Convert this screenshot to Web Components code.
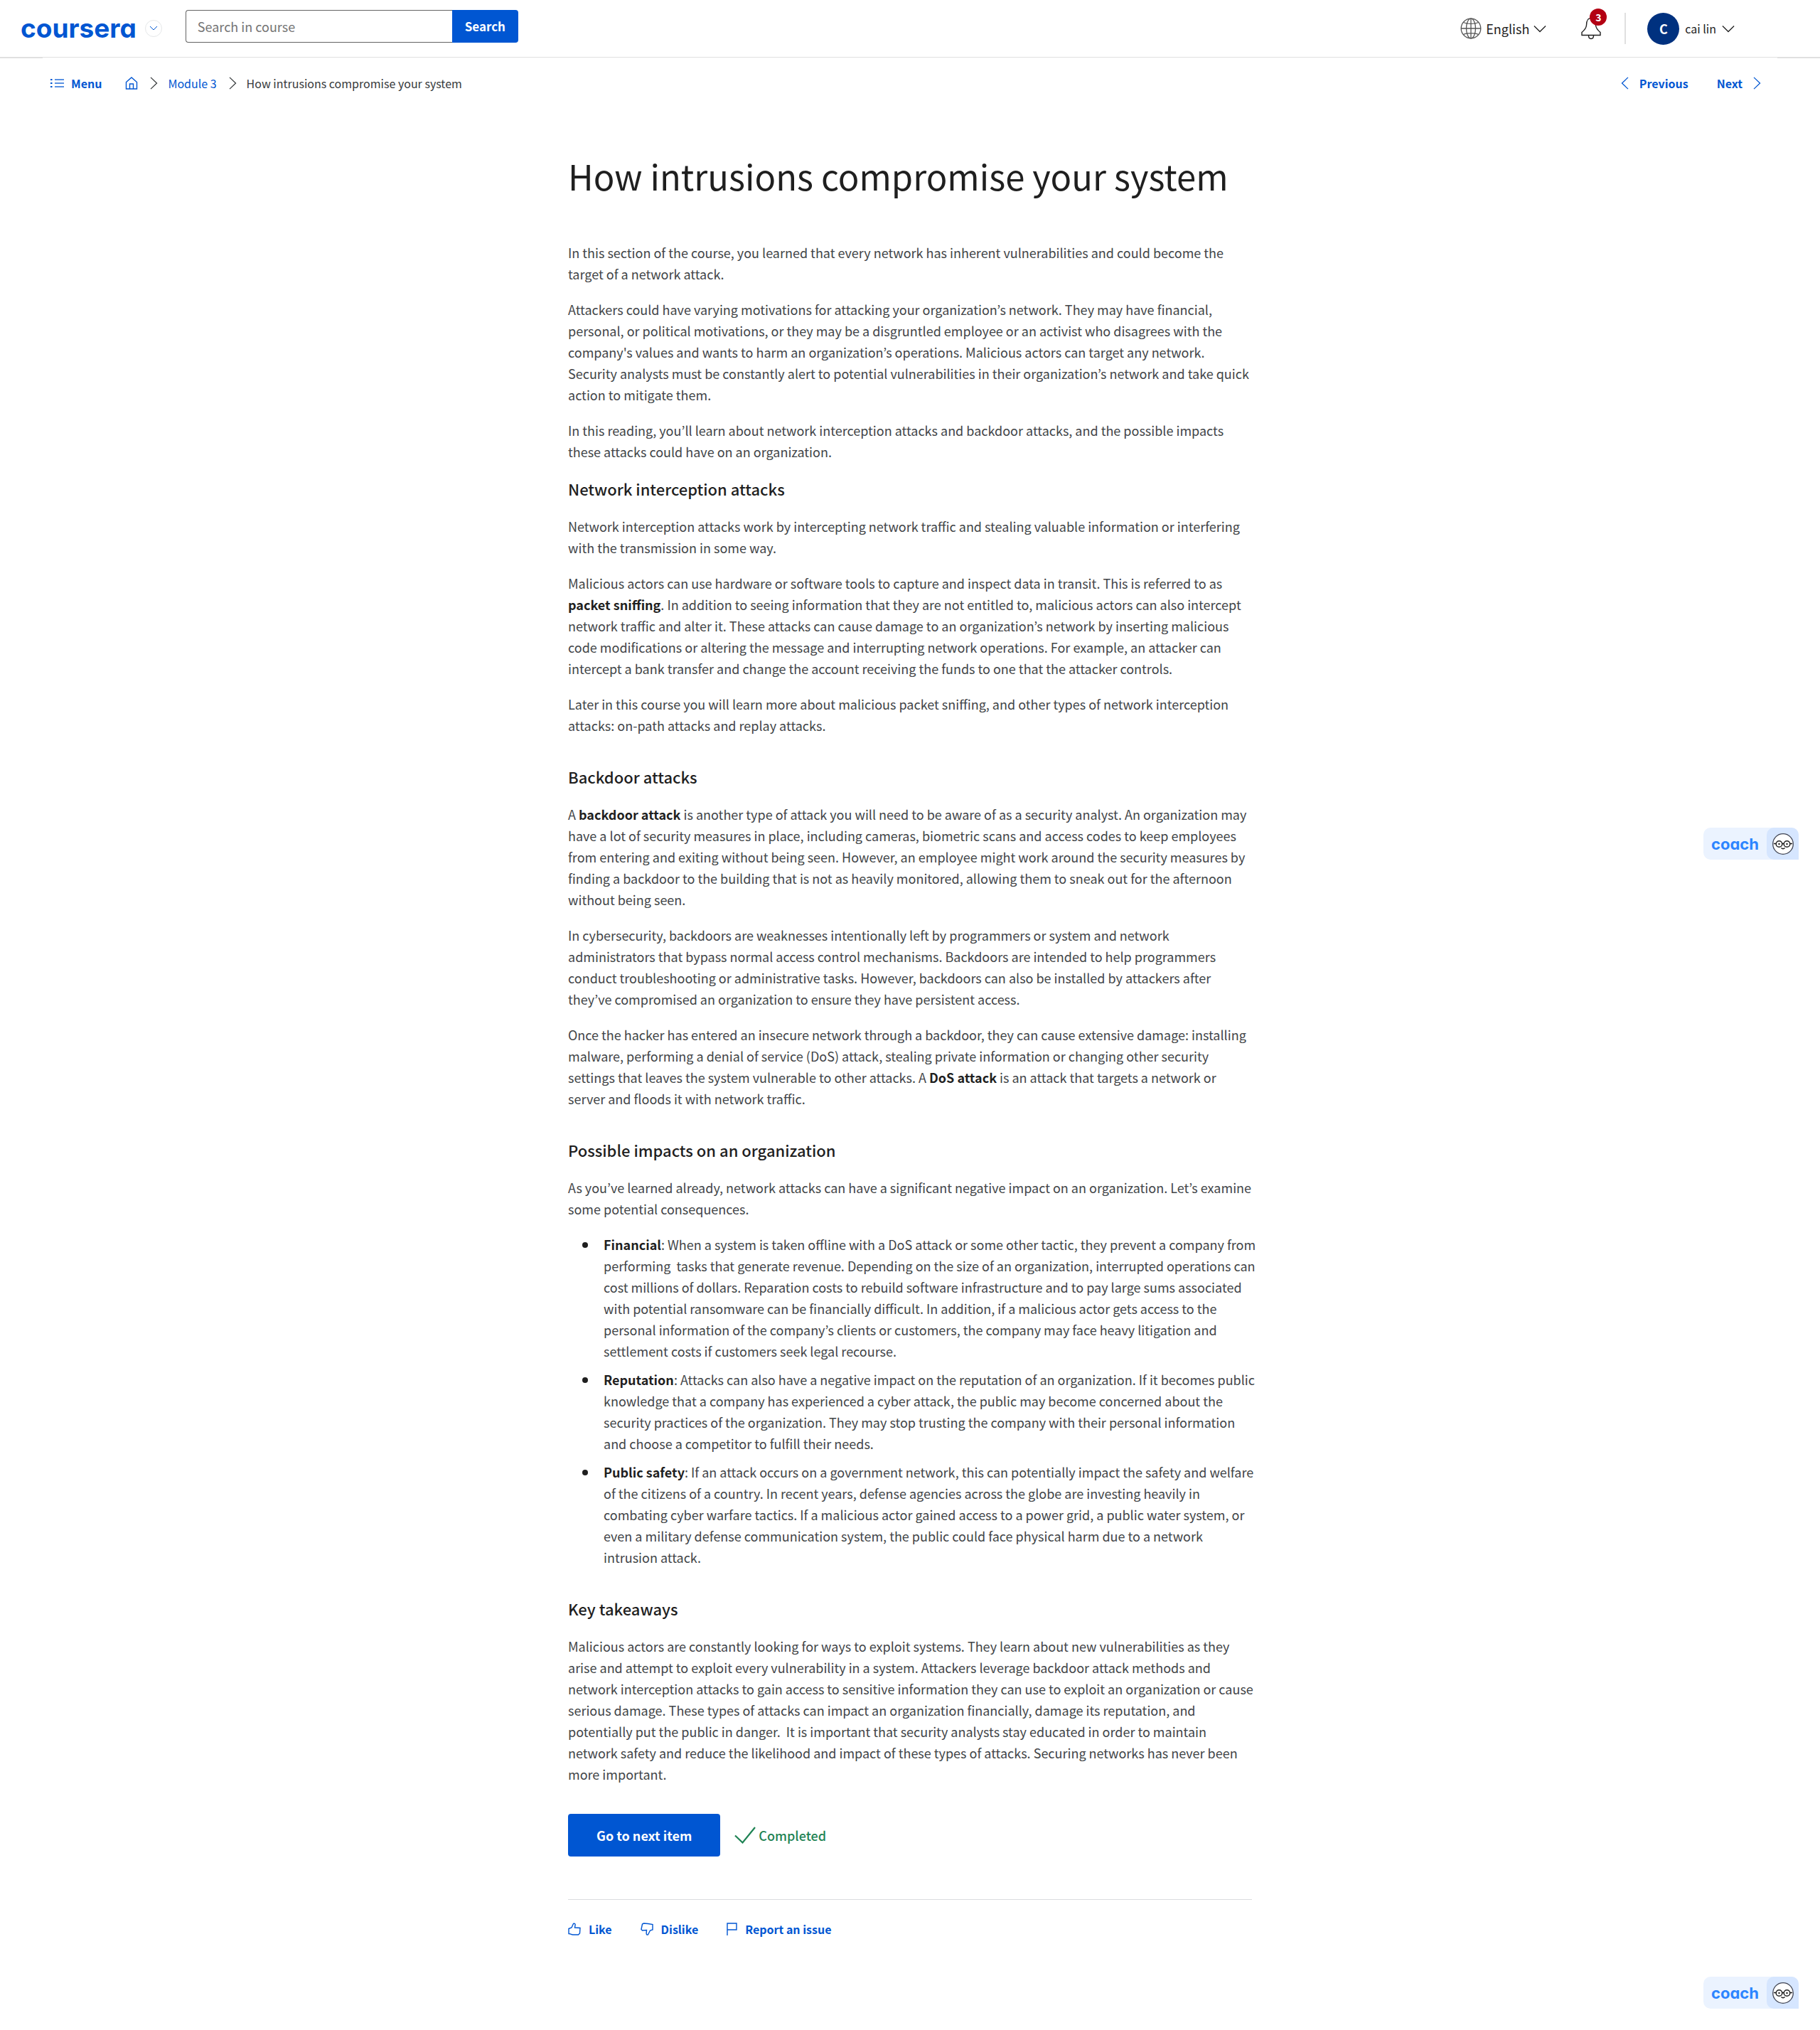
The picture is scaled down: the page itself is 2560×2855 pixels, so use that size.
<!DOCTYPE html>
<html lang="en">
<head>
<meta charset="utf-8">
<title>How intrusions compromise your system</title>
<style>
:root{--blue:#0056d2;--ink:#1f1f1f;--rule:#e0e0e0}
body{margin:0;background:#fff;color:#424548;font:18px/30px "Noto Sans CJK KR","Noto Sans",sans-serif}
</style>
</head>
<body>
<course-page></course-page>
<script>
const base = `<style>
*{box-sizing:border-box}
a{color:var(--blue);text-decoration:none}
button{font:inherit;border:0;background:none;padding:0;color:inherit;cursor:pointer}
svg{display:block;fill:none;stroke:currentColor;flex:none}
</style>`;
class Base extends HTMLElement{
  connectedCallback(){
    if(!this.shadowRoot) this.attachShadow({mode:'open'}).innerHTML = base + this.view();
  }
}
const icons = {
  down:['0 0 20 12','<path d="M1 1.500l9 9 9-9"/>',18,11],
  left:['0 0 12 20','<path d="M11 1L1.500 10 11 19"/>',11,18],
  right:['0 0 12 20','<path d="M1 1l9.500 9L1 19"/>',11,18],
  list:['0 0 19 14','<path stroke-width="2" d="M0 2h2.500M0 7h2.500M0 12h2.500"/><path stroke-width="2" opacity=".65" d="M6 2h13M6 7h13M6 12h13"/>',19,14],
  home:['0 0 18 18','<path d="M1.500 7.500L9 1l7.500 6.500V17h-15zM6.500 17v-7h5v7"/>',18,18],
  globe:['0 0 30 30','<g stroke-width="1.300" stroke="#555"><circle cx="15" cy="15" r="13.800"/><ellipse cx="15" cy="15" rx="6.500" ry="13.800"/><path d="M1 15h28M15 1v28M4.500 6.500c5 2.500 16 2.500 21 0M4.500 23.500c5-2.500 16-2.500 21 0"/></g>',30,30],
  bell:['0 0 28 32','<path d="M1 25.500v-4c3-2.500 6-5 6.500-10C7.500 5 9 1.500 14 1.500S20.500 5 20.500 11.500c.5 5 3.500 7.500 6.500 10v4zM10.500 26c0 6 7 6 7 0"/>',28,32],
  check:['0 0 30 24','<path stroke-width="2.200" d="M1 12.500l10.500 10L29 1"/>',30,24],
  like:['0 0 18 18','<path d="M1 8.500l4-1.500 2.500-5.500C9.500.5 10.500 2 10 4l-.500 3 7.500.500-.500 7.500-2 2H7c-3 0-3.500-1.500-6-1.500z"/>',18,18],
  dislike:['0 0 18 18','<path d="M1 9.500L2.500 2l2-1 6 .500L17 2.500v7.500l-3.500 1-3 6c-2 .500-2.500-1-2.300-2.500L8.500 10.500l-6 .500z"/>',18,18],
  flag:['0 0 15 18','<path d="M1 18V1h13v9H1"/>',15,18]
};
customElements.define('ui-icon', class extends Base{
  view(){
    const [box,body,w,h] = icons[this.getAttribute('name')];
    return `<style>:host{display:block;flex:none}svg{stroke-width:1.400px}</style><svg viewBox="${box}" width="${w}" height="${h}" aria-hidden="true">${body}</svg>`;
  }
});
customElements.define('site-header', class extends Base{
  view(){return `<style>
:host{display:block;border-bottom:1px solid var(--rule)}
header{display:flex;align-items:center;height:80px;padding:0 120px 0 29px}
.logo{font:bold 37px/40px Inter,sans-serif;font-feature-settings:"cv11";color:var(--blue)}
.explore{width:24px;height:24px;border:1px solid #e5e7e8;border-radius:50%;display:grid;place-items:center;color:var(--blue);margin-left:12px}
.explore svg{width:12px;height:8px}
form{display:flex;width:468px;height:46px;margin:0 auto 6px 33px}
input{flex:1;min-width:0;font:inherit;color:var(--ink);border:1px solid #636363;border-right:0;border-radius:4px 0 0 4px;padding:0 16px;background:#fff}
input::placeholder{color:#757575;opacity:1}
form button{width:93px;background:var(--blue);color:#fff;font-size:17px;font-weight:600;border-radius:0 4px 4px 0}
.menu{display:flex;align-items:center;gap:6px;color:var(--ink)}
.bell{position:relative;margin-left:49px;color:var(--ink)}
.badge{position:absolute;left:12px;top:-12px;width:24px;height:24px;border-radius:50%;background:#b30013;color:#fff;font-size:14px;line-height:24px;font-weight:600;text-align:center}
.sep{width:2px;height:44px;background:var(--rule);margin:0 30px 0 33px}
.face{width:45px;height:45px;border-radius:50%;background:#00317f;color:#fff;font-size:18px;font-weight:600;line-height:45px}
.user{font-size:16px;gap:8px}
</style><header>
<a class="logo" href="#">coursera</a>
<button class="explore" aria-label="Explore"><svg viewBox="0 0 12 8"><path d="M1 1l5 5 5-5"/></svg></button>
<form onsubmit="return false"><input type="search" aria-label="Search in course" placeholder="Search in course"><button>Search</button></form>
<button class="menu"><ui-icon name="globe"></ui-icon><span>English</span><ui-icon name="down"></ui-icon></button>
<button class="bell" aria-label="Notifications"><ui-icon name="bell"></ui-icon><span class="badge">3</span></button>
<span class="sep"></span>
<button class="menu user"><span class="face">C</span><span>cai lin</span><ui-icon name="down"></ui-icon></button>
</header>`}
});
customElements.define('course-nav', class extends Base{
  view(){return `<style>
:host{display:block;font-size:16px;line-height:24px;background:linear-gradient(var(--rule),var(--rule)) left top/60px 1px no-repeat,linear-gradient(var(--rule),var(--rule)) right top/60px 1px no-repeat}
nav{display:flex;align-items:center;height:72px;padding:0 83px 0 71px}
.link{display:flex;align-items:center;gap:10px;color:var(--blue);font-weight:600}
ol{display:flex;align-items:center;list-style:none;margin:0 auto 0 33px;padding:0;gap:14px}
li{display:flex;align-items:center;gap:17px;color:#373a3c}
.steps{display:flex;gap:40px}.steps .link{gap:15px}
</style><nav aria-label="Course">
<button class="link"><ui-icon name="list"></ui-icon>Menu</button>
<ol><li><a href="#" aria-label="Home"><ui-icon name="home"></ui-icon></a><ui-icon name="right"></ui-icon></li>
<li><a href="#">Module 3</a><ui-icon name="right"></ui-icon></li><li>How intrusions compromise your system</li></ol>
<div class="steps"><a class="link" href="#"><ui-icon name="left"></ui-icon>Previous</a><a class="link" href="#">Next<ui-icon name="right"></ui-icon></a></div>
</nav>`}
});
customElements.define('coach-tab', class extends Base{
  view(){return `<style>
:host{display:block}
button{display:flex;align-items:center;width:134px;height:45px;background:#ebf3ff;border-radius:10px 10px 0 10px}
.word{flex:1;font:bold 22px/40px Inter,sans-serif;font-feature-settings:"cv11";color:#2d85ff}
.face{display:grid;place-items:center;width:45px;height:45px;background:#d6e6ff;border-radius:10px 10px 0 10px;color:#1f1f1f}
</style><button><span class="word">coach</span><span class="face"><svg width="30" height="30" viewBox="0 0 30 30"><circle cx="15" cy="15" r="14.300" fill="#fff" stroke="#404453" stroke-width="1.300"/><g stroke-width="1.500"><circle cx="9.500" cy="15" r="4.300"/><circle cx="20.500" cy="15" r="4.300"/><path d="M2 14.500h3M25 14.500h3M13.500 14.500h3M12.500 20.500c1.500 1.500 3.500 1.500 5 0"/></g><circle cx="9.500" cy="15" r="1.200" fill="currentColor" stroke="none"/><circle cx="20.500" cy="15" r="1.200" fill="currentColor" stroke="none"/></svg></span></button>`}
});
customElements.define('reading-article', class extends Base{
  view(){return `<style>
:host{display:block}
article{margin-right:-4px}
h1{margin:0 0 58px;font-size:49px;line-height:70px;font-weight:400;color:var(--ink)}
h2{margin:0 0 20px;font-size:22px;line-height:35px;font-weight:500;color:var(--ink)}
h2.apart{margin-top:40px}
p{margin:0 0 20px}
b{font-weight:600;color:var(--ink)}
ul{margin:0 -4px 0 0;padding-left:50px;list-style:none}
li{margin-bottom:10px}
li::before{content:"";float:left;width:8px;height:8px;margin:12px 22px 0 -30px;border-radius:50%;background:var(--ink)}
</style><article>
<h1>How intrusions compromise your system</h1>
<p>In this section of the course, you learned that every network has inherent vulnerabilities and could become the target of a network attack.</p>
<p>Attackers could have varying motivations for attacking your organization’s network. They may have financial, personal, or political motivations, or they may be a disgruntled employee or an activist who disagrees with the company's values and wants to harm an organization’s operations. Malicious actors can target any network. Security analysts must be constantly alert to potential vulnerabilities in their organization’s network and take quick action to mitigate them.</p>
<p>In this reading, you’ll learn about network interception attacks and backdoor attacks, and the possible impacts these attacks could have on an organization.</p>
<h2>Network interception attacks</h2>
<p>Network interception attacks work by intercepting network traffic and stealing valuable information or interfering with the transmission in some way.</p>
<p>Malicious actors can use hardware or software tools to capture and inspect data in transit. This is referred to as <b>packet sniffing</b>. In addition to seeing information that they are not entitled to, malicious actors can also intercept network traffic and alter it. These attacks can cause damage to an organization’s network by inserting malicious code modifications or altering the message and interrupting network operations. For example, an attacker can intercept a bank transfer and change the account receiving the funds to one that the attacker controls.</p>
<p>Later in this course you will learn more about malicious packet sniffing, and other types of network interception attacks: on-path attacks and replay attacks.</p>
<h2 class="apart">Backdoor attacks</h2>
<p>A <b>backdoor attack</b> is another type of attack you will need to be aware of as a security analyst. An organization may have a lot of security measures in place, including cameras, biometric scans and access codes to keep employees from entering and exiting without being seen. However, an employee might work around the security measures by finding a backdoor to the building that is not as heavily monitored, allowing them to sneak out for the afternoon without being seen.</p>
<p>In cybersecurity, backdoors are weaknesses intentionally left by programmers or system and network administrators that bypass normal access control mechanisms. Backdoors are intended to help programmers conduct troubleshooting or administrative tasks. However, backdoors can also be installed by attackers after they’ve compromised an organization to ensure they have persistent access.</p>
<p>Once the hacker has entered an insecure network through a backdoor, they can cause extensive damage: installing malware, performing a denial of service (DoS) attack, stealing private information or changing other security settings that leaves the system vulnerable to other attacks. A <b>DoS attack</b> is an attack that targets a network or server and floods it with network traffic.</p>
<h2 class="apart">Possible impacts on an organization</h2>
<p>As you’ve learned already, network attacks can have a significant negative impact on an organization. Let’s examine some potential consequences.</p>
<ul>
<li><b>Financial</b>: When a system is taken offline with a DoS attack or some other tactic, they prevent a company from performing&nbsp; tasks that generate revenue. Depending on the size of an organization, interrupted operations can cost millions of dollars. Reparation costs to rebuild software infrastructure and to pay large sums associated with potential ransomware can be financially difficult. In addition, if a malicious actor gets access to the personal information of the company’s clients or customers, the company may face heavy litigation and settlement costs if customers seek legal recourse.</li>
<li><b>Reputation</b>: Attacks can also have a negative impact on the reputation of an organization. If it becomes public knowledge that a company has experienced a cyber attack, the public may become concerned about the security practices of the organization. They may stop trusting the company with their personal information and choose a competitor to fulfill their needs.</li>
<li><b>Public safety</b>: If an attack occurs on a government network, this can potentially impact the safety and welfare of the citizens of a country. In recent years, defense agencies across the globe are investing heavily in combating cyber warfare tactics. If a malicious actor gained access to a power grid, a public water system, or even a military defense communication system, the public could face physical harm due to a network intrusion attack.</li>
</ul>
<h2 class="apart">Key takeaways</h2>
<p>Malicious actors are constantly looking for ways to exploit systems. They learn about new vulnerabilities as they arise and attempt to exploit every vulnerability in a system. Attackers leverage backdoor attack methods and network interception attacks to gain access to sensitive information they can use to exploit an organization or cause serious damage. These types of attacks can impact an organization financially, damage its reputation, and potentially put the public in danger.&nbsp; It is important that security analysts stay educated in order to maintain network safety and reduce the likelihood and impact of these types of attacks. Securing networks has never been more important.</p>
</article>`}
});
customElements.define('item-footer', class extends Base{
  view(){return `<style>
:host{display:block;margin-top:41px}
.done{display:flex;align-items:center;gap:20px;padding-bottom:60px;border-bottom:1px solid #dadcde}
.next{height:60px;padding:0 40px;background:var(--blue);color:#fff;font-weight:600;border-radius:4px}
.state{display:flex;align-items:center;gap:4px;color:#1f8354;font-weight:500}
.acts{display:flex;gap:40px;padding-top:26px}
.acts button{display:flex;align-items:center;gap:11px;color:var(--blue);font-size:16px;font-weight:600}
</style><div class="done"><button class="next">Go to next item</button><span class="state"><ui-icon name="check"></ui-icon>Completed</span></div>
<div class="acts"><button><ui-icon name="like"></ui-icon>Like</button><button><ui-icon name="dislike"></ui-icon>Dislike</button><button><ui-icon name="flag"></ui-icon>Report an issue</button></div>`}
});
customElements.define('course-page', class extends Base{
  view(){return `<style>
:host{display:block;position:relative}
main{max-width:962px;margin:0 auto;padding:59px 0 127px}
coach-tab{position:absolute;right:30px;bottom:30px}
coach-tab.mid{position:fixed;top:1164px;bottom:auto}
</style><site-header></site-header><course-nav></course-nav>
<main><reading-article></reading-article><item-footer></item-footer></main>
<coach-tab class="mid"></coach-tab><coach-tab></coach-tab>`}
});
</script>
</body>
</html>
